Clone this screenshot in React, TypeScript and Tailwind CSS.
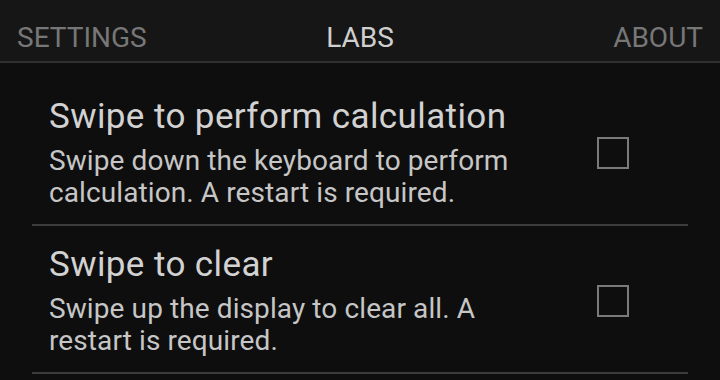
import React from "react";

const items = [
  {
    title: "Swipe to perform calculation",
    desc: "Swipe down the keyboard to perform calculation. A restart is required.",
  },
  {
    title: "Swipe to clear",
    desc: "Swipe up the display to clear all. A restart is required.",
  },
];

export default function App() {
  return (
    <div className="w-[720px] h-[380px] overflow-hidden bg-[#0e0e0e] font-['Roboto','Noto_Sans',sans-serif]">
      <div className="h-[63px] bg-[#161616] border-b-2 border-[#2f2f2f] grid grid-cols-3 px-[17px] pt-[21px] text-[28px] leading-[33px]">
        <div className="text-left text-[#777777]">SETTINGS</div>
        <div className="text-center text-[#cfcfcf]">LABS</div>
        <div className="text-right text-[#777777]">ABOUT</div>
      </div>
      <div className="mx-[32px] pt-[15px]">
        {items.map((it) => (
          <div
            key={it.title}
            className="flex items-center border-b-2 border-[#3c3c3c] pl-[17px] pt-[19px] pb-[15px]"
          >
            <div className="w-[500px]">
              <div className="text-[35px] leading-[40px] tracking-[0.4px] text-[#d2d2d2]">{it.title}</div>
              <div className="mt-[8px] text-[28px] leading-[32px] tracking-[0.1px] text-[#c6c6c6]">{it.desc}</div>
            </div>
            <div className="ml-[48px] w-[32px] h-[32px] border-2 border-[#7a7a7a]" />
          </div>
        ))}
      </div>
    </div>
  );
}
